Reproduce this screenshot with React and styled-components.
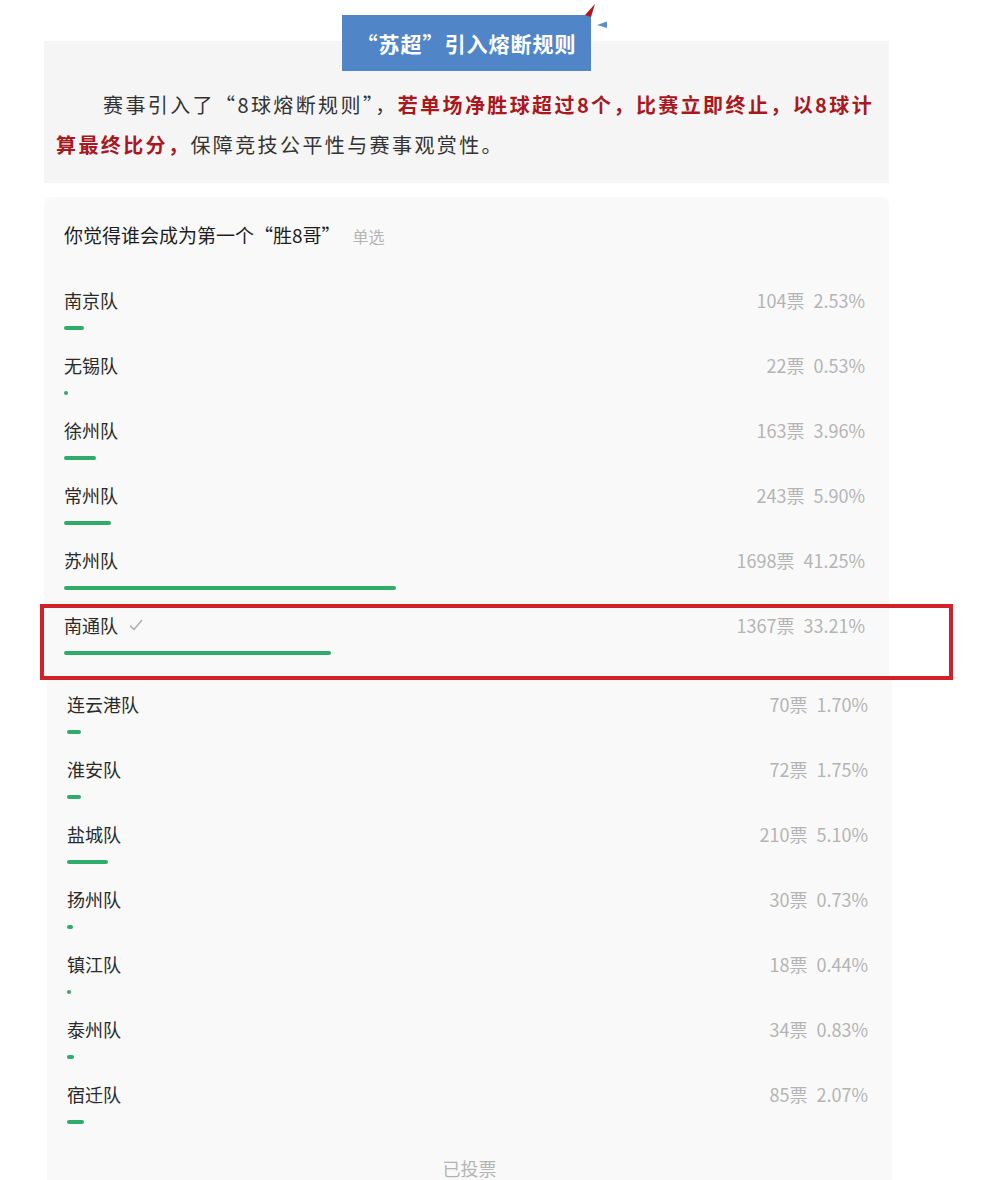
import React from "react";
import styled, { createGlobalStyle } from "styled-components";

const GlobalStyle = createGlobalStyle`
  html, body { margin: 0; padding: 0; background: #ffffff; }
  body {
    font-family: "Noto Sans CJK SC", "Noto Sans", "Liberation Sans", sans-serif;
    color: #333;
  }
`;

const Page = styled.div`
  width: 845px;
  padding-left: 44px;
`;

const Intro = styled.section`
  margin-top: 41px;
  background: #f5f5f5;
  padding: 0 12px 18px 12px;
  display: flex;
  flex-direction: column;
`;

const Badge = styled.div`
  position: relative;
  align-self: center;
  margin-top: -26px;
  width: 249px;
  height: 56px;
  background: #5086c8;
  color: #fff;
  font-size: 21px;
  font-weight: 700;
  letter-spacing: 1px;
  display: flex;
  align-items: center;
  justify-content: center;
`;

const BadgeDeco = styled.svg`
  position: absolute;
  left: 240px;
  top: -12px;
`;

const Paragraph = styled.p`
  margin: 14px -5px 0 0;
  font-size: 20px;
  line-height: 40px;
  letter-spacing: 2.4px;
  text-indent: 47px;
  color: #333;
`;

const Emph = styled.strong`
  color: #a8181e;
  font-weight: 700;
`;

const PollCard = styled.div`
  width: 845px;
  box-sizing: border-box;
  margin-top: ${(p) => (p.$top ? "14px" : "0")};
  margin-left: ${(p) => (p.$shift ? "3px" : "0")};
  background: #f9f9f9;
  border-radius: ${(p) => (p.$top ? "8px 8px 0 0" : "0")};
  padding: ${(p) => (p.$top ? "25px 20px 0" : "14px 20px 0")};
`;

const PollTitle = styled.div`
  font-size: 19px;
  line-height: 26px;
  color: #1e1e1e;
  margin-bottom: 38px;
`;

const Hint = styled.span`
  color: #b4b4b4;
  font-size: 16px;
  margin-left: 12px;
`;

const Row = styled.div`
  position: relative;
  padding-bottom: 22px;
`;

const RowHead = styled.div`
  display: flex;
  justify-content: space-between;
  align-items: center;
  height: 26px;
`;

const Label = styled.span`
  font-size: 18px;
  line-height: 26px;
  color: #2a2a2a;
  display: flex;
  align-items: center;
`;

const Stats = styled.span`
  font-size: 18px;
  line-height: 26px;
  color: #b4b4b4;
  padding-right: 4px;
`;

const Pct = styled.span`
  margin-left: 9px;
`;

const Track = styled.div`
  margin-top: 13px;
  height: 4px;
`;

const Fill = styled.div`
  height: 4px;
  border-radius: 2px;
  background: #2fab6a;
`;

const CheckMark = styled.svg`
  margin-left: 11px;
`;

const Highlight = styled.div`
  position: absolute;
  left: -24px;
  top: -8px;
  width: 913px;
  height: 76px;
  border: 4px solid #cf2229;
  box-sizing: border-box;
  pointer-events: none;
`;

const Footer = styled.div`
  text-align: center;
  font-size: 18px;
  line-height: 26px;
  color: #b4b4b4;
  padding-top: 9px;
`;

const topOptions = [
  { name: "南京队", votes: 104, pct: "2.53" },
  { name: "无锡队", votes: 22, pct: "0.53" },
  { name: "徐州队", votes: 163, pct: "3.96" },
  { name: "常州队", votes: 243, pct: "5.90" },
  { name: "苏州队", votes: 1698, pct: "41.25" },
  { name: "南通队", votes: 1367, pct: "33.21", checked: true },
];

const bottomOptions = [
  { name: "连云港队", votes: 70, pct: "1.70" },
  { name: "淮安队", votes: 72, pct: "1.75" },
  { name: "盐城队", votes: 210, pct: "5.10" },
  { name: "扬州队", votes: 30, pct: "0.73" },
  { name: "镇江队", votes: 18, pct: "0.44" },
  { name: "泰州队", votes: 34, pct: "0.83" },
  { name: "宿迁队", votes: 85, pct: "2.07" },
];

function Option({ o }) {
  return (
    <Row>
      <RowHead>
        <Label>
          {o.name}
          {o.checked && (
            <CheckMark width="14" height="12" viewBox="0 0 14 12">
              <polyline
                points="1,6.5 5,10.5 13,1"
                fill="none"
                stroke="#a8a8a8"
                strokeWidth="1.3"
              />
            </CheckMark>
          )}
        </Label>
        <Stats>
          {o.votes}票<Pct>{o.pct}%</Pct>
        </Stats>
      </RowHead>
      <Track>
        <Fill style={{ width: `${o.pct}%` }} />
      </Track>
      {o.checked && <Highlight />}
    </Row>
  );
}

export default function App() {
  return (
    <>
      <GlobalStyle />
      <Page>
        <Intro>
          <Badge>
            “苏超”引入熔断规则
            <BadgeDeco width="30" height="28" viewBox="0 0 30 28">
              <polygon points="3,12 13,1 9,14" fill="#b3151c" />
              <polygon points="15,22 25,18.5 25,25" fill="#5b8dc9" />
            </BadgeDeco>
          </Badge>
          <Paragraph>
            赛事引入了“8球熔断规则”，
            <Emph>若单场净胜球超过8个，比赛立即终止，以8球计算最终比分，</Emph>
            保障竞技公平性与赛事观赏性。
          </Paragraph>
        </Intro>
        <PollCard $top>
          <PollTitle>
            你觉得谁会成为第一个“胜8哥”<Hint>单选</Hint>
          </PollTitle>
          {topOptions.map((o) => (
            <Option key={o.name} o={o} />
          ))}
        </PollCard>
        <PollCard $shift>
          {bottomOptions.map((o) => (
            <Option key={o.name} o={o} />
          ))}
          <Footer>已投票</Footer>
        </PollCard>
      </Page>
    </>
  );
}
